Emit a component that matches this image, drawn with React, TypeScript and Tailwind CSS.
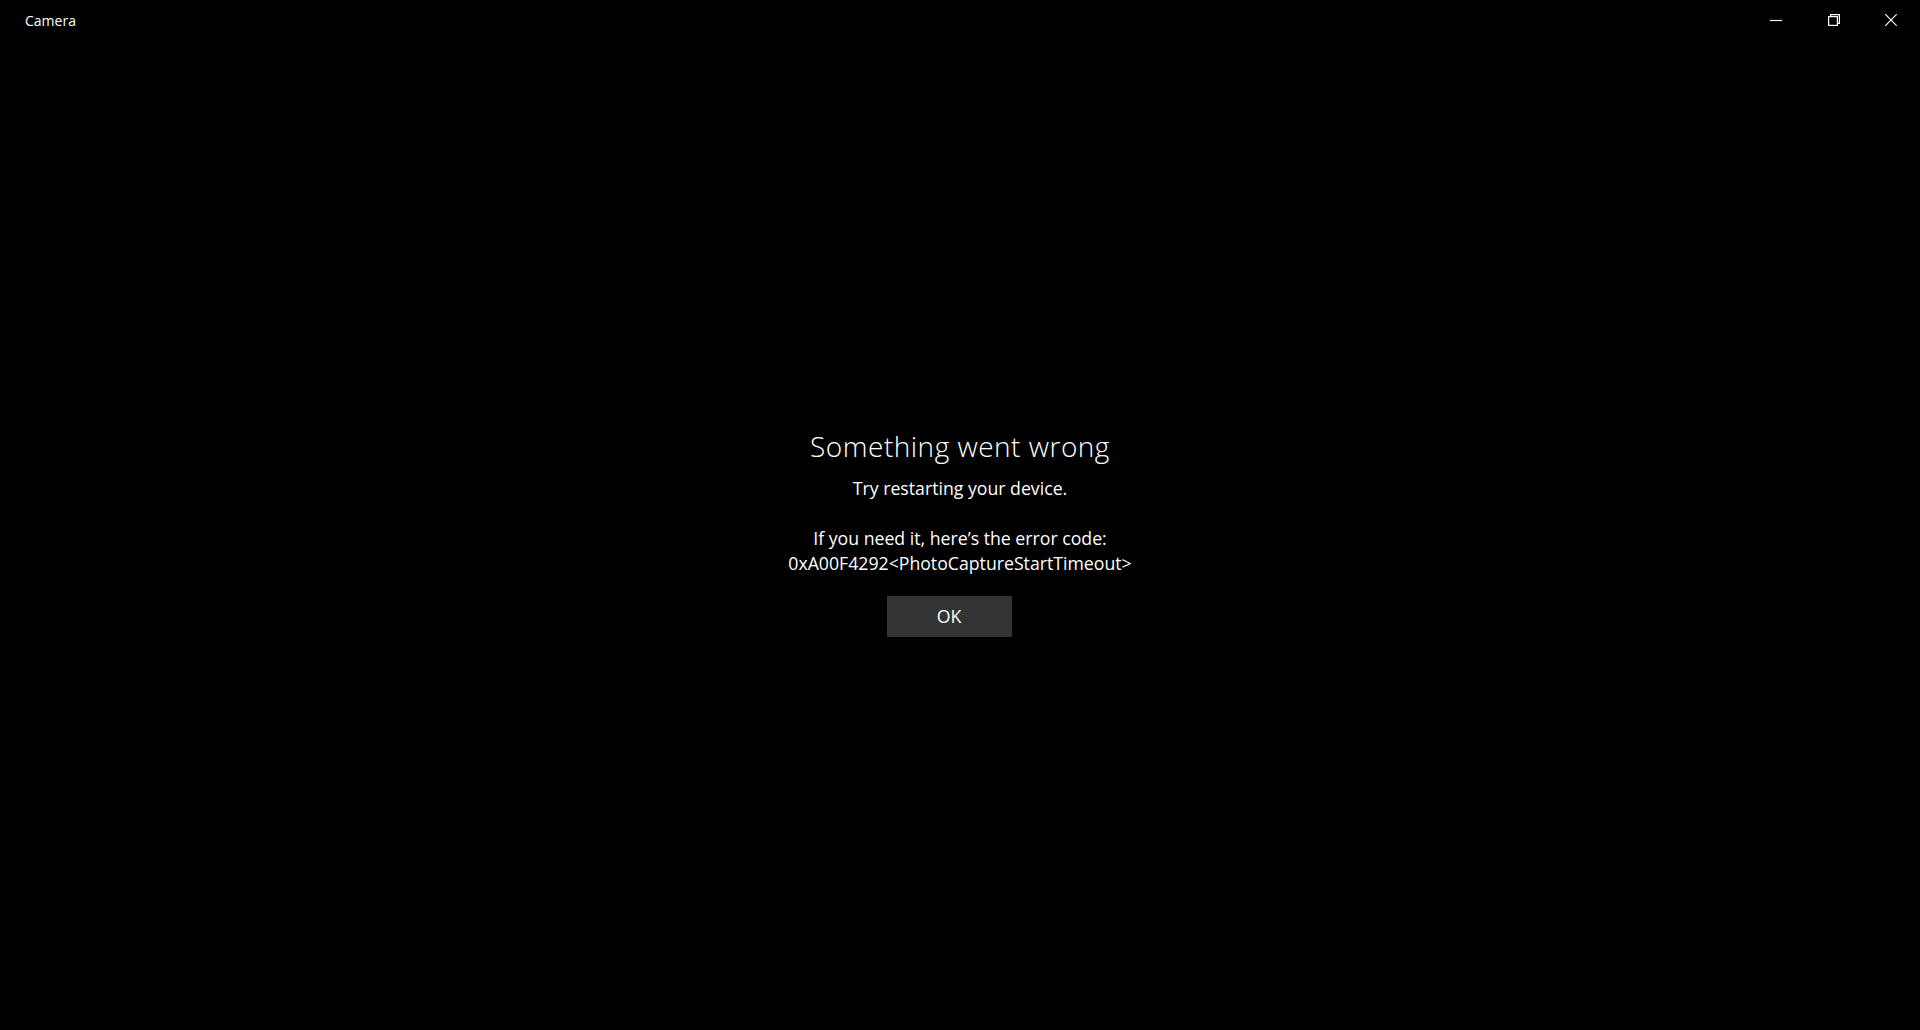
import React from "react";

export default function App() {
  return (
    <div className="w-[1920px] h-[1030px] bg-black flex flex-col overflow-hidden text-white" style={{ fontFamily: '"Open Sans", "Noto Sans", sans-serif' }}>
      <div className="h-10 flex items-stretch">
        <div className="flex-1 flex items-center pl-[25px] text-[14px] text-white">Camera</div>
        <div className="w-[58px] flex items-center justify-center">
          <svg width="12" height="12" viewBox="0 0 12 12" fill="none" stroke="white" strokeWidth="1.2">
            <path d="M0 6.5 H12" />
          </svg>
        </div>
        <div className="w-[57px] flex items-center justify-center">
          <svg width="12" height="12" viewBox="0 0 12 12" fill="none" stroke="white" strokeWidth="1.2">
            <rect x="0.6" y="2.6" width="8.8" height="8.8" />
            <path d="M2.6 2.6 V0.6 H11.4 V9.4 H9.4" />
          </svg>
        </div>
        <div className="w-[58px] flex items-center justify-center">
          <svg width="12" height="12" viewBox="0 0 12 12" fill="none" stroke="white" strokeWidth="1.2">
            <path d="M0.3 0.3 L11.7 11.7 M11.7 0.3 L0.3 11.7" />
          </svg>
        </div>
      </div>
      <div className="flex-1 flex flex-col items-center justify-center pb-[6px]">
        <div className="text-[28px] leading-[36px] font-light tracking-[0.5px] text-white">Something went wrong</div>
        <div className="mt-[12px] text-[17.7px] leading-[25px] text-center">
          <div>Try restarting your device.</div>
          <div>&nbsp;</div>
          <div>If you need it, here’s the error code:</div>
          <div>0xA00F4292&lt;PhotoCaptureStartTimeout&gt;</div>
        </div>
        <button className="mt-[20px] mr-[22px] w-[125px] h-[41px] bg-[#333333] text-[17.7px] text-white flex items-center justify-center">
          OK
        </button>
      </div>
    </div>
  );
}
